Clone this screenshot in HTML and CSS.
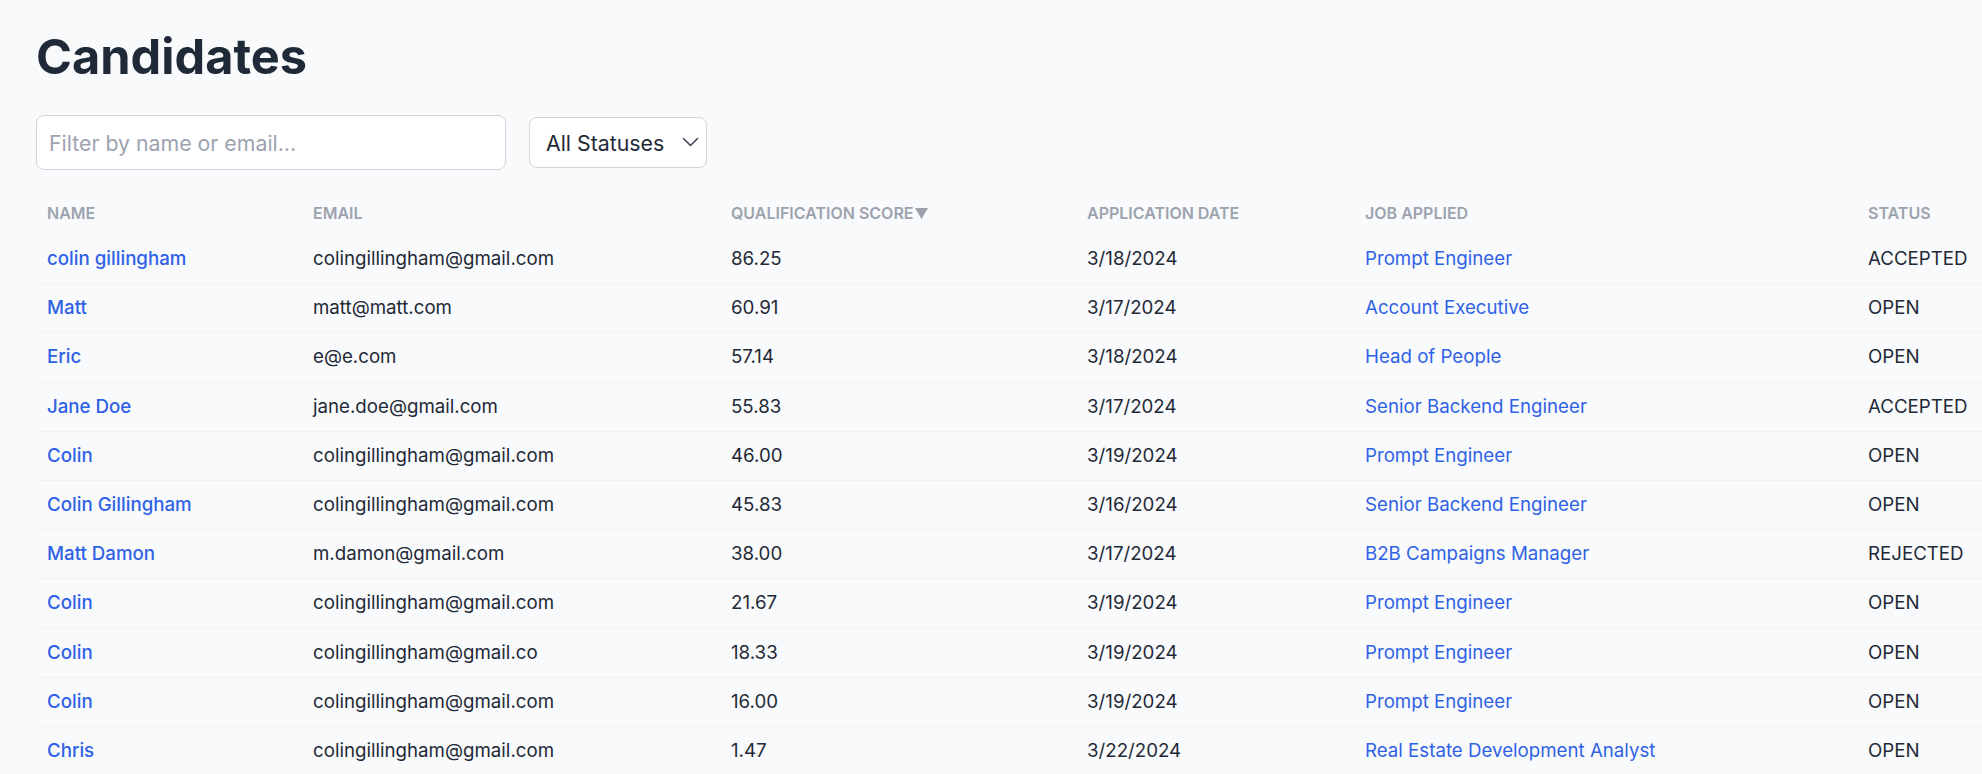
FILE: index.html
```html
<!DOCTYPE html>
<html lang="en">
<head>
<meta charset="utf-8">
<title>Candidates</title>
<link rel="stylesheet" href="styles.css">
</head>
<body>
<main class="page">
  <h1 class="title">Candidates</h1>
  <div class="filters">
    <input class="search" type="text" placeholder="Filter by name or email...">
    <div class="select-wrap">
      <select class="status-select">
        <option>All Statuses</option>
        <option>Open</option>
        <option>Accepted</option>
        <option>Rejected</option>
      </select>
      <svg class="chevron" width="17" height="10" viewBox="0 0 17 10"><polyline points="1.5,1.5 8.5,8.5 15.5,1.5" fill="none" stroke="#374151" stroke-width="1.5" stroke-linecap="round" stroke-linejoin="round"/></svg>
    </div>
  </div>
  <table class="grid">
    <colgroup>
      <col class="c-name"><col class="c-email"><col class="c-score"><col class="c-date"><col class="c-job"><col class="c-status">
    </colgroup>
    <thead>
      <tr>
        <th>Name</th>
        <th>Email</th>
        <th>Qualification Score<svg class="sort" width="13" height="11" viewBox="0 0 13 11"><polygon points="0,0 13,0 6.5,11" fill="#9ca3af"/></svg></th>
        <th>Application Date</th>
        <th>Job Applied</th>
        <th>Status</th>
      </tr>
    </thead>
    <tbody>
      <tr><td><a class="name" href="#">colin gillingham</a></td><td>colingillingham@gmail.com</td><td>86.25</td><td>3/18/2024</td><td><a class="job" href="#">Prompt Engineer</a></td><td>ACCEPTED</td></tr>
      <tr><td><a class="name" href="#">Matt</a></td><td>matt@matt.com</td><td>60.91</td><td>3/17/2024</td><td><a class="job" href="#">Account Executive</a></td><td>OPEN</td></tr>
      <tr><td><a class="name" href="#">Eric</a></td><td>e@e.com</td><td>57.14</td><td>3/18/2024</td><td><a class="job" href="#">Head of People</a></td><td>OPEN</td></tr>
      <tr><td><a class="name" href="#">Jane Doe</a></td><td>jane.doe@gmail.com</td><td>55.83</td><td>3/17/2024</td><td><a class="job" href="#">Senior Backend Engineer</a></td><td>ACCEPTED</td></tr>
      <tr><td><a class="name" href="#">Colin</a></td><td>colingillingham@gmail.com</td><td>46.00</td><td>3/19/2024</td><td><a class="job" href="#">Prompt Engineer</a></td><td>OPEN</td></tr>
      <tr><td><a class="name" href="#">Colin Gillingham</a></td><td>colingillingham@gmail.com</td><td>45.83</td><td>3/16/2024</td><td><a class="job" href="#">Senior Backend Engineer</a></td><td>OPEN</td></tr>
      <tr><td><a class="name" href="#">Matt Damon</a></td><td>m.damon@gmail.com</td><td>38.00</td><td>3/17/2024</td><td><a class="job" href="#">B2B Campaigns Manager</a></td><td>REJECTED</td></tr>
      <tr><td><a class="name" href="#">Colin</a></td><td>colingillingham@gmail.com</td><td>21.67</td><td>3/19/2024</td><td><a class="job" href="#">Prompt Engineer</a></td><td>OPEN</td></tr>
      <tr><td><a class="name" href="#">Colin</a></td><td>colingillingham@gmail.co</td><td>18.33</td><td>3/19/2024</td><td><a class="job" href="#">Prompt Engineer</a></td><td>OPEN</td></tr>
      <tr><td><a class="name" href="#">Colin</a></td><td>colingillingham@gmail.com</td><td>16.00</td><td>3/19/2024</td><td><a class="job" href="#">Prompt Engineer</a></td><td>OPEN</td></tr>
      <tr><td><a class="name" href="#">Chris</a></td><td>colingillingham@gmail.com</td><td>1.47</td><td>3/22/2024</td><td><a class="job" href="#">Real Estate Development Analyst</a></td><td>OPEN</td></tr>
    </tbody>
  </table>
</main>
</body>
</html>
```

FILE: styles.css
```css
html, body {
  margin: 0;
  padding: 0;
  background: #f9fafb;
  overflow: hidden;
}

body {
  font-family: Inter, "Liberation Sans", sans-serif;
  color: #1f2937;
}

.page {
  padding: 28px 0 0 36px;
}

.title {
  margin: 0;
  font-size: 48.7px;
  line-height: 58px;
  font-weight: 700;
  color: #1f2937;
}

.filters {
  display: flex;
  align-items: center;
  gap: 23px;
  margin-top: 29px;
}

.search {
  box-sizing: border-box;
  width: 470px;
  height: 55px;
  padding: 0 12px;
  border: 1px solid #d1d5db;
  border-radius: 8px;
  background: #fff;
  font-family: Inter, "Liberation Sans", sans-serif;
  font-size: 21.3px;
  color: #1f2937;
  outline: none;
}

.search::placeholder {
  color: #9ca3af;
}

.select-wrap {
  position: relative;
}

.status-select {
  box-sizing: border-box;
  width: 178px;
  height: 51px;
  padding: 0 40px 0 16px;
  border: 1px solid #d1d5db;
  border-radius: 8px;
  background: #fff;
  font-family: Inter, "Liberation Sans", sans-serif;
  font-size: 21.3px;
  color: #1f2937;
  appearance: none;
  -webkit-appearance: none;
  outline: none;
}

.chevron {
  position: absolute;
  right: 8px;
  top: 20px;
  pointer-events: none;
}

.grid {
  width: 100%;
  margin-top: 20px;
  border-collapse: collapse;
  table-layout: fixed;
}

.c-name { width: 266px; }
.c-email { width: 418px; }
.c-score { width: 356px; }
.c-date { width: 278px; }
.c-job { width: 503px; }

.grid th {
  padding: 11px 11px 10px;
  text-align: left;
  font-size: 16px;
  line-height: 24px;
  font-weight: 600;
  text-transform: uppercase;
  color: #9ca3af;
  white-space: nowrap;
}

.sort {
  margin-left: 1px;
  vertical-align: 0;
}

.grid td {
  padding: 11px 11px;
  font-size: 18.7px;
  line-height: 26.2px;
  color: #1f2937;
  border-bottom: 1px solid #eef0f2;
  white-space: nowrap;
}

.name, .job {
  color: #2f62e6;
  text-decoration: none;
}

.name {
  font-weight: 500;
}
```
